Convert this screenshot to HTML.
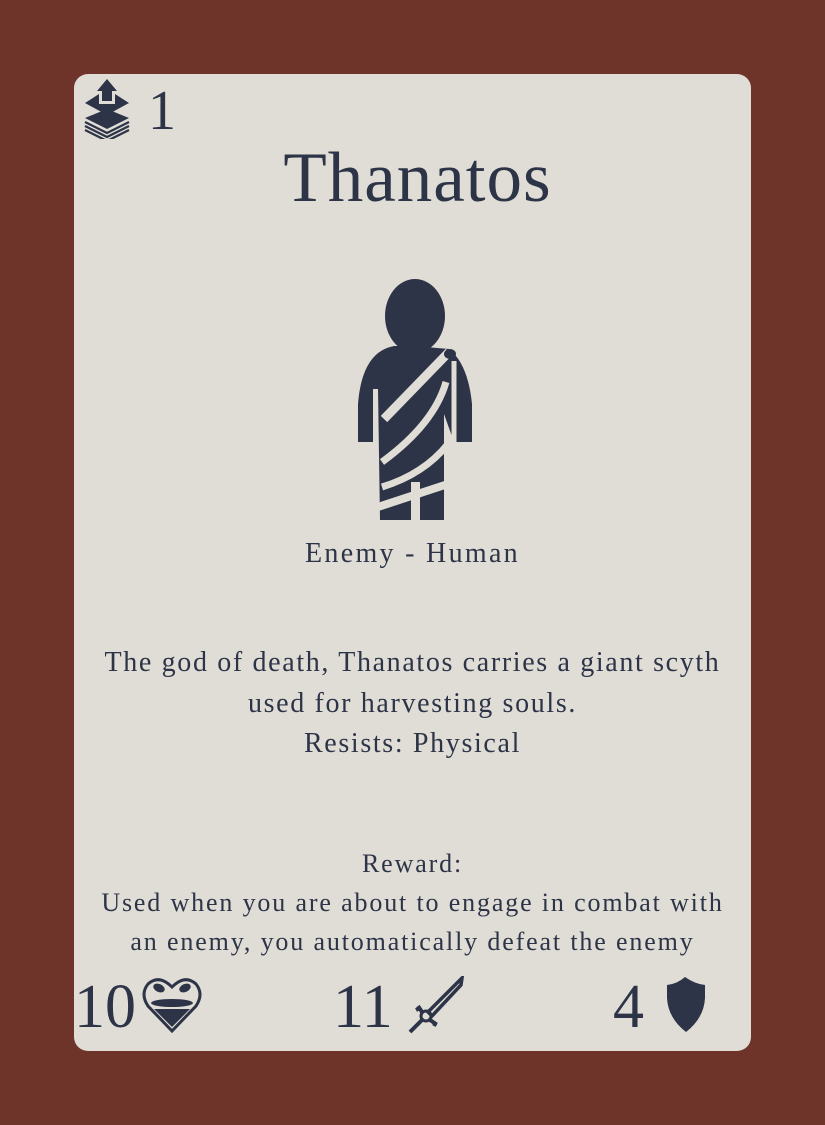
<!DOCTYPE html>
<html><head><meta charset="utf-8"><style>
html,body{margin:0;padding:0;}
body{width:825px;height:1125px;background:#6e3429;position:relative;overflow:hidden;font-family:"Liberation Serif",serif;color:#2d3447;}
.card{position:absolute;left:74px;top:74px;width:677px;height:977px;background:#dfddd5;border-radius:14px;}
.t{position:absolute;left:0;width:677px;text-align:center;white-space:nowrap;}
.abs{position:absolute;white-space:nowrap;}
</style></head><body>
<div class="card">
  <svg class="abs" style="left:8px;top:3px" width="50" height="62" viewBox="0 0 50 62">
    <path d="M25 2 L35 14 L30 14 L30 24 L20 24 L20 14 L15 14 Z" fill="#2d3447"/>
    <path d="M17 17 L17 27 L33 27 L33 17 L47 26 L25 38 L3 26 Z" fill="#2d3447"/>
    <path d="M3 41 L25 32 L47 41 L25 52 Z" fill="#2d3447"/>
    <path d="M3 45 L25 56 L47 45 M3 49 L25 60 L47 49 M3 53 L25 64 L47 53" stroke="#2d3447" stroke-width="2.2" fill="none"/>
  </svg>
  <div class="abs" style="left:74px;top:5px;font-size:56px;line-height:64px">1</div>
  <div class="t" style="left:5px;top:64px;font-size:71px;line-height:80px;letter-spacing:1px">Thanatos</div>
  <svg class="abs" style="left:280px;top:200px" width="125" height="250" viewBox="0 0 125 250">
    <ellipse cx="61" cy="42" rx="30" ry="37" fill="#2d3447"/>
    <path d="M40 72 Q8 78 4 130 L4 168 L19 168 L19 115 L24 115 L26 246 L57 246 L57 208 L66 208 L66 246 L90 246 L90 140 L100 168 L118 168 L118 130 Q114 90 95 75 L60 72 Z" fill="#2d3447"/>
    <path d="M30 145 L95 78" stroke="#dfddd5" stroke-width="9" fill="none"/>
    <path d="M28 188 Q80 150 92 108" stroke="#dfddd5" stroke-width="7" fill="none"/>
    <path d="M28 213 Q70 200 94 170" stroke="#dfddd5" stroke-width="7" fill="none"/>
    <path d="M24 233 L100 208" stroke="#dfddd5" stroke-width="8" fill="none"/>
    <path d="M100 87 L100 215" stroke="#dfddd5" stroke-width="5" fill="none"/>
    <ellipse cx="96" cy="80" rx="6" ry="5" fill="#2d3447"/>
    <rect x="0" y="168" width="20" height="10" fill="#dfddd5"/>
  </svg>
  <div class="t" style="top:462px;font-size:28px;line-height:36px;letter-spacing:2.3px">Enemy - Human</div>
  <div class="t" style="top:569px;font-size:28px;line-height:40.5px;letter-spacing:1.65px">The god of death, Thanatos carries a giant scyth<br>used for harvesting souls.<br>Resists: Physical</div>
  <div class="t" style="top:770px;font-size:26px;line-height:39px;letter-spacing:1.85px">Reward:<br>Used when you are about to engage in combat with<br>an enemy, you automatically defeat the enemy</div>
  <div class="abs" style="left:0px;top:898px;font-size:62px;line-height:70px">10</div>
  <svg class="abs" style="left:68px;top:902px" width="60" height="58" viewBox="0 0 60 58">
    <path d="M30 55 L6 30 Q-2 18 6 8 Q17 -2 30 11 Q43 -2 54 8 Q62 18 54 30 Z" fill="none" stroke="#2d3447" stroke-width="3"/>
    <ellipse cx="17" cy="12" rx="6" ry="4" fill="#2d3447" transform="rotate(25 17 12)"/>
    <ellipse cx="43" cy="12" rx="6" ry="4" fill="#2d3447" transform="rotate(-25 43 12)"/>
    <ellipse cx="30" cy="27" rx="21" ry="4" fill="#2d3447"/>
    <path d="M12 33 L48 33 L30 51 Z" fill="#2d3447"/>
  </svg>
  <div class="abs" style="left:259px;top:898px;font-size:62px;line-height:70px">11</div>
  <svg class="abs" style="left:332px;top:902px" width="60" height="58" viewBox="0 0 60 58">
    <path d="M22 36 L52 6 L56 2 L55 9 L26 40 Z" fill="none" stroke="#2d3447" stroke-width="3.5"/>
    <circle cx="20" cy="40" r="5" fill="none" stroke="#2d3447" stroke-width="3"/>
    <path d="M16 44 L4 56 M12 30 L16 36 M10 34 L14 32 M24 44 L30 48 M28 50 L30 46" stroke="#2d3447" stroke-width="4" fill="none"/>
  </svg>
  <div class="abs" style="left:539px;top:898px;font-size:62px;line-height:70px">4</div>
  <svg class="abs" style="left:593px;top:902px" width="40" height="58" viewBox="0 0 40 58">
    <path d="M18 1 Q28 8 38 9 L38 22 Q37 42 19 56 Q1 42 0 22 L0 9 Q10 8 18 1 Z" fill="#2d3447"/>
  </svg>
</div>
</body></html>
